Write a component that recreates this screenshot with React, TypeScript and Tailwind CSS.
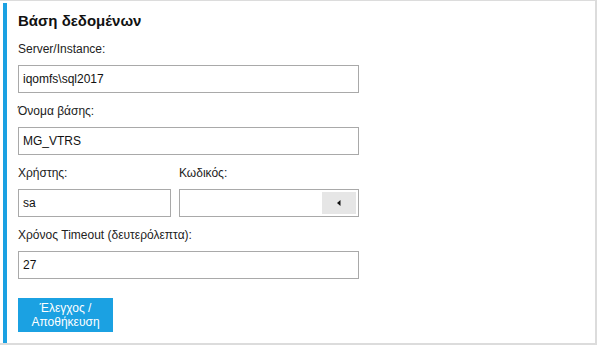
import React from 'react'

const font = { fontFamily: '"Liberation Sans", "DejaVu Sans", sans-serif' }

function cn(...c: string[]) {
  return c.filter(Boolean).join(' ')
}

function Field({ label, value, className = '' }: { label: string; value: string; className?: string }) {
  return (
    <div className={cn('flex flex-col', className)}>
      <label className="text-[12px] leading-[14px] text-[#222] mb-[9px]">{label}</label>
      <div className="h-[28px] border border-[#a9a9a9] bg-white flex items-center px-[4px] text-[12px] text-[#111]">
        {value}
      </div>
    </div>
  )
}

export default function App() {
  return (
    <div className="w-[598px] h-[347px] bg-white" style={font}>
      <div className="w-[597px] h-[345px] border-t border-r-2 border-b-2 border-[#dcdcdc] pt-[2px] pl-[3px] flex">
        <div className="w-[4px] h-[340px] bg-[#1ba1e2]" />
        <div className="flex-1 pl-[11px] pt-[9px]">
          <h1 className="text-[15px] leading-[18px] font-bold text-[#111] mb-[12px]">Βάση δεδομένων</h1>

          <div className="w-[341px] flex flex-col gap-[11px]">
            <Field label="Server/Instance:" value="iqomfs\sql2017" />
            <Field label="Όνομα βάσης:" value="MG_VTRS" />

            <div className="flex gap-[8px]">
              <Field label="Χρήστης:" value="sa" className="w-[153px]" />
              <div className="flex flex-col flex-1">
                <label className="text-[12px] leading-[14px] text-[#222] mb-[9px]">Κωδικός:</label>
                <div className="h-[28px] border border-[#a9a9a9] bg-white flex items-center justify-end p-[2px]">
                  <div className="w-[34px] h-full bg-[#e6e6e6] flex items-center justify-center">
                    <svg width="4" height="6" viewBox="0 0 4 6">
                      <path d="M3.5 0 L0 3 L3.5 6 Z" fill="#111" />
                    </svg>
                  </div>
                </div>
              </div>
            </div>

            <Field label="Χρόνος Timeout (δευτερόλεπτα):" value="27" />
          </div>

          <button className="mt-[19px] w-[95px] h-[34px] bg-[#1ba1e2] text-white text-[12px] leading-[14px] flex flex-col items-center justify-center">
            <span>Έλεγχος /</span>
            <span>Αποθήκευση</span>
          </button>
        </div>
      </div>
    </div>
  )
}
